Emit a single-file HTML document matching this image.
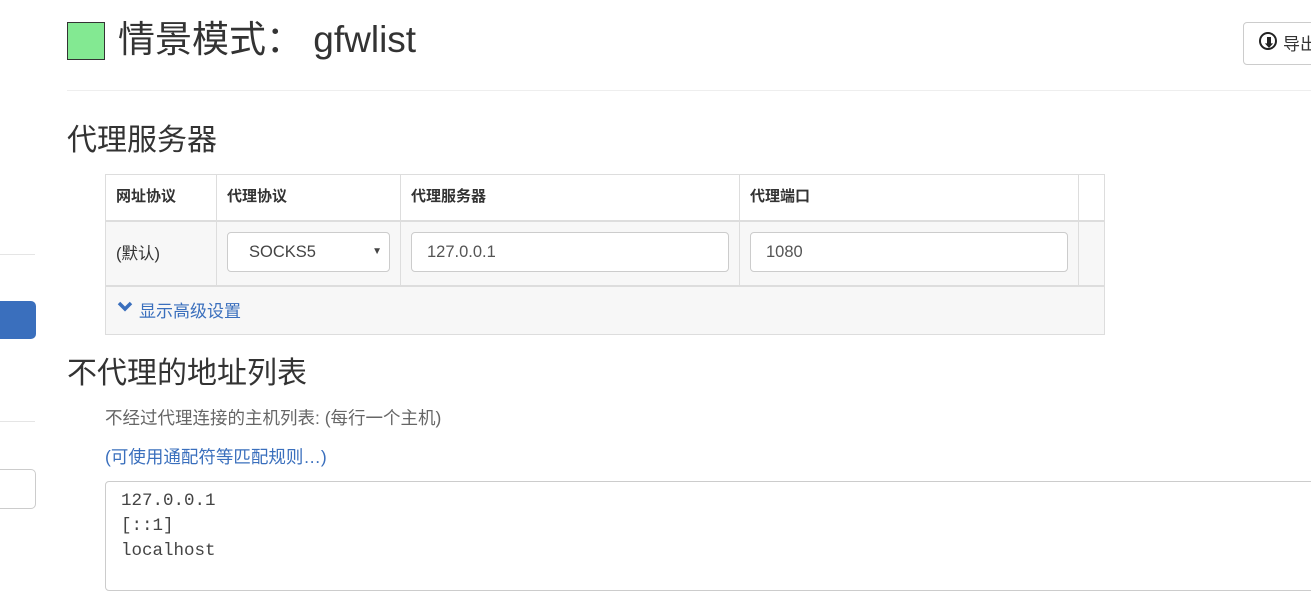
<!DOCTYPE html>
<html><head><meta charset="utf-8"><style>
*{box-sizing:border-box}
body{margin:0;width:1311px;height:580px;overflow:hidden;background:#fff;font-family:"Liberation Sans","Noto Sans CJK SC",sans-serif;color:#333;position:relative}
.a{position:absolute;white-space:nowrap}
.cell{position:absolute;font-size:15px;white-space:nowrap}
.inp{position:absolute;border:1px solid #ccc;border-radius:4px;background:#fff;font-size:16.5px;color:#555;padding-left:15px;line-height:38px;height:40px}
</style></head><body>
<div class="a" style="left:0;top:254px;width:35px;height:1px;background:#e5e5e5"></div>
<div class="a" style="left:-6px;top:301px;width:42px;height:38px;background:#3a6fbd;border-radius:5px"></div>
<div class="a" style="left:0;top:421px;width:35px;height:1px;background:#e5e5e5"></div>
<div class="a" style="left:-6px;top:469px;width:42px;height:40px;border:1px solid #ccc;border-radius:5px"></div>

<div class="a" style="left:67px;top:22px;width:38px;height:38px;background:#83e992;border:1px solid #333"></div>
<div class="a" style="left:118px;top:16px;font-size:37px;line-height:48px;color:#333">情景模式：&nbsp;gfwlist</div>
<div class="a" style="left:1243px;top:22px;width:80px;height:43px;border:1px solid #ccc;border-radius:4px"></div>
<div class="a" style="left:1259px;top:32px;width:18px;height:18px;border:2.5px solid #222;border-radius:50%"></div>
<div class="a" style="left:1263px;top:34px;font-size:12px;font-weight:bold;color:#222">⬇</div>
<div class="a" style="left:1283px;top:30px;font-size:17px">导出</div>
<div class="a" style="left:67px;top:90px;width:1244px;height:1px;background:#eee"></div>

<div class="a" style="left:67px;top:122px;font-size:30px;line-height:38px">代理服务器</div>

<div class="a" style="left:105px;top:174px;width:1000px;height:161px;border:1px solid #ddd;background:#f7f7f7"></div>
<div class="a" style="left:106px;top:175px;width:998px;height:45px;background:#fff"></div>
<div class="a" style="left:106px;top:220px;width:998px;height:2px;background:#ddd"></div>
<div class="a" style="left:106px;top:285px;width:998px;height:2px;background:#ddd"></div>
<div class="a" style="left:216px;top:175px;width:1px;height:110px;background:#ddd"></div>
<div class="a" style="left:400px;top:175px;width:1px;height:110px;background:#ddd"></div>
<div class="a" style="left:739px;top:175px;width:1px;height:110px;background:#ddd"></div>
<div class="a" style="left:1078px;top:175px;width:1px;height:110px;background:#ddd"></div>
<div class="cell" style="left:116px;top:185px;font-weight:bold">网址协议</div>
<div class="cell" style="left:227px;top:185px;font-weight:bold">代理协议</div>
<div class="cell" style="left:411px;top:185px;font-weight:bold">代理服务器</div>
<div class="cell" style="left:750px;top:185px;font-weight:bold">代理端口</div>
<div class="cell" style="left:116px;top:240px;font-size:16.5px">(默认)</div>
<div class="inp" style="left:227px;top:232px;width:163px;padding-left:21px;color:#444">SOCKS5<span style="position:absolute;right:7px;font-size:10px">▼</span></div>
<div class="inp" style="left:411px;top:232px;width:318px">127.0.0.1</div>
<div class="inp" style="left:750px;top:232px;width:318px">1080</div>
<svg class="a" style="left:117px;top:300px" width="16" height="12" viewBox="0 0 16 12"><path d="M2 3 L8 9 L14 3" stroke="#3a6fbd" stroke-width="3.5" fill="none"/></svg>
<div class="cell" style="left:139px;top:297px;color:#3a6fbd;font-size:17px">显示高级设置</div>

<div class="a" style="left:67px;top:355px;font-size:30px;line-height:38px">不代理的地址列表</div>
<div class="a" style="left:105px;top:405px;font-size:17.5px;color:#666">不经过代理连接的主机列表: (每行一个主机)</div>
<div class="a" style="left:105px;top:444px;font-size:17.5px;color:#3a6fbd">(可使用通配符等匹配规则…)</div>
<div class="a" style="left:105px;top:481px;width:1220px;height:110px;border:1px solid #ccc;border-radius:4px;padding:7px 15px;font-family:'Liberation Mono',monospace;font-size:17.5px;line-height:25px;color:#444">127.0.0.1<br>[::1]<br>localhost</div>
</body></html>
